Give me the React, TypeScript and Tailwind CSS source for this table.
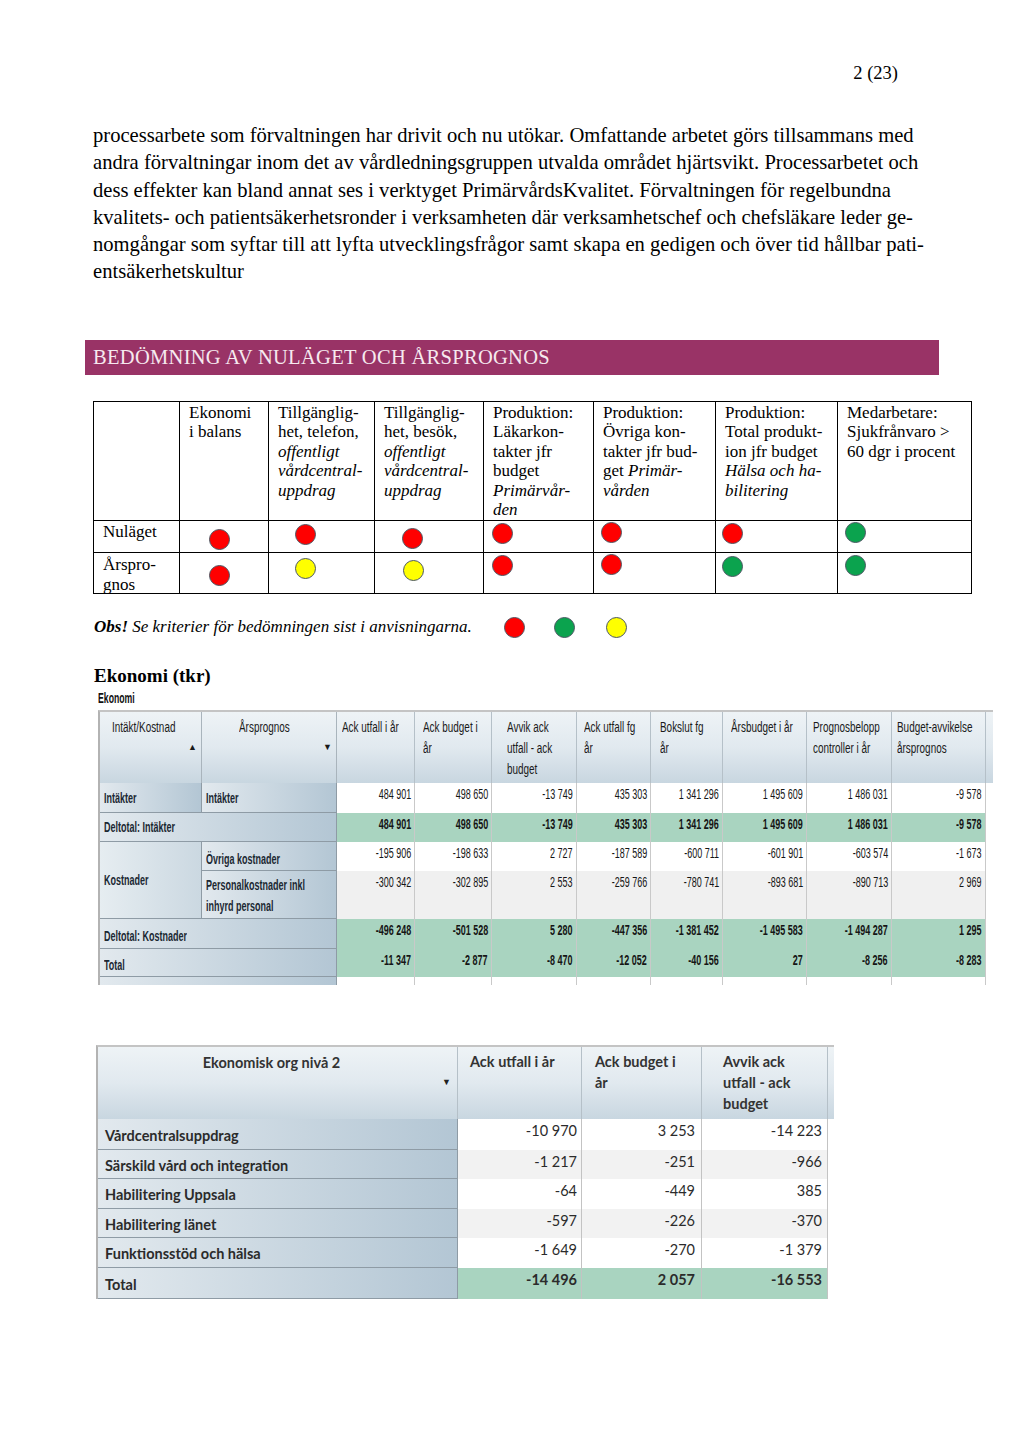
import React from 'react';

type DotColor = 'r' | 'g' | 'y';

const dotBg: Record<DotColor, string> = {
  r: 'bg-[#ff0000]',
  g: 'bg-[#0ba34e]',
  y: 'bg-[#ffff00]',
};

const Dot = ({ c, cls = '' }: { c: DotColor; cls?: string }) => (
  <div className={`w-[21px] h-[21px] rounded-full border-[1.5px] border-[#4b5763] ${dotBg[c]} ${cls}`} />
);

// Bedömning: header texts, one entry per line
const assessHeaders: React.ReactNode[][] = [
  ['Ekonomi', 'i balans'],
  ['Tillgänglig-', 'het, telefon,', <i>offentligt</i>, <i>vårdcentral-</i>, <i>uppdrag</i>],
  ['Tillgänglig-', 'het, besök,', <i>offentligt</i>, <i>vårdcentral-</i>, <i>uppdrag</i>],
  ['Produktion:', 'Läkarkon-', 'takter jfr', 'budget', <i>Primärvår-</i>, <i>den</i>],
  ['Produktion:', 'Övriga kon-', 'takter jfr bud-', <>get <i>Primär-</i></>, <i>vården</i>],
  ['Produktion:', 'Total produkt-', 'ion jfr budget', <i>Hälsa och ha-</i>, <i>bilitering</i>],
  ['Medarbetare:', 'Sjukfrånvaro >', '60 dgr i procent'],
];

const nulaget: { c: DotColor; cls: string }[] = [
  { c: 'r', cls: 'ml-[29px] mt-[8px]' },
  { c: 'r', cls: 'ml-[26px] mt-[3px]' },
  { c: 'r', cls: 'ml-[27px] mt-[7px]' },
  { c: 'r', cls: 'ml-[8px] mt-[2px]' },
  { c: 'r', cls: 'ml-[7px] mt-[1px]' },
  { c: 'r', cls: 'ml-[6px] mt-[2px]' },
  { c: 'g', cls: 'ml-[7px] mt-[1px]' },
];

const arsprognos: { c: DotColor; cls: string }[] = [
  { c: 'r', cls: 'ml-[29px] mt-[12px]' },
  { c: 'y', cls: 'ml-[26px] mt-[5px]' },
  { c: 'y', cls: 'ml-[28px] mt-[7px]' },
  { c: 'r', cls: 'ml-[8px] mt-[2px]' },
  { c: 'r', cls: 'ml-[7px] mt-[1px]' },
  { c: 'g', cls: 'ml-[6px] mt-[3px]' },
  { c: 'g', cls: 'ml-[7px] mt-[2px]' },
];

// Ekonomi table
const ekHeaders = [
  { lines: ['Ack utfall i år'], pl: 'pl-[5px]' },
  { lines: ['Ack budget i', 'år'], pl: 'pl-[8px]' },
  { lines: ['Avvik ack', 'utfall - ack', 'budget'], pl: 'pl-[15px]' },
  { lines: ['Ack utfall fg', 'år'], pl: 'pl-[7px]' },
  { lines: ['Bokslut fg', 'år'], pl: 'pl-[9px]' },
  { lines: ['Årsbudget i år'], pl: 'pl-[8px]' },
  { lines: ['Prognosbelopp', 'controller i år'], pl: 'pl-[6px]' },
  { lines: ['Budget-avvikelse', 'årsprognos'], pl: 'pl-[5px]' },
];

const GREEN = 'bg-[#a9d4c0]';
const GREY = 'bg-[#f0f0f0]';
const WHITE = 'bg-white';

const intakter = ['484 901', '498 650', '-13 749', '435 303', '1 341 296', '1 495 609', '1 486 031', '-9 578'];
const ovriga = ['-195 906', '-198 633', '2 727', '-187 589', '-600 711', '-601 901', '-603 574', '-1 673'];
const personal = ['-300 342', '-302 895', '2 553', '-259 766', '-780 741', '-893 681', '-890 713', '2 969'];
const deltotK = ['-496 248', '-501 528', '5 280', '-447 356', '-1 381 452', '-1 495 583', '-1 494 287', '1 295'];
const total = ['-11 347', '-2 877', '-8 470', '-12 052', '-40 156', '27', '-8 256', '-8 283'];

const headGrad = 'bg-linear-to-b from-[#eef3f6] via-[#e1e9ef] to-[#c8d6e0]';
const labelGrad = 'bg-linear-to-r from-[#e2e9ee] to-[#b3c6d4]';

const NumCells = ({ vals, bg, bold = false }: { vals: string[]; bg: string; bold?: boolean }) => (
  <>
    {vals.map((v, i) => (
      <div key={i} className={`${bg} border-r border-[#c9c9c9] flex justify-end items-start pr-[3px] pt-[2px]`}>
        <span
          className={`inline-block origin-right scale-x-[0.6] whitespace-nowrap text-[15px] leading-[17px] text-[#151515] ${
            bold ? 'font-bold' : ''
          }`}
        >
          {v}
        </span>
      </div>
    ))}
    <div />
  </>
);

const Label = ({ children, cls = '' }: { children: React.ReactNode; cls?: string }) => (
  <div className={`${labelGrad} border-r border-b border-[#8e9ba5] flex flex-col justify-center pl-[4px] text-[15.5px] leading-[21px] text-[#1b2833] font-bold ${cls}`}>
    {children}
  </div>
);

const Sq = ({ children }: { children: React.ReactNode }) => (
  <div className="origin-left scale-x-[0.58] whitespace-nowrap">{children}</div>
);

const Hq = ({ children }: { children: React.ReactNode }) => (
  <div className="origin-left scale-x-[0.64] whitespace-nowrap">{children}</div>
);

// Org nivå 2 table
const orgRows = [
  { label: 'Vårdcentralsuppdrag', vals: ['-10 970', '3 253', '-14 223'], bg: WHITE },
  { label: 'Särskild vård och integration', vals: ['-1 217', '-251', '-966'], bg: 'bg-[#f2f2f2]' },
  { label: 'Habilitering Uppsala', vals: ['-64', '-449', '385'], bg: WHITE },
  { label: 'Habilitering länet', vals: ['-597', '-226', '-370'], bg: 'bg-[#f2f2f2]' },
  { label: 'Funktionsstöd och hälsa', vals: ['-1 649', '-270', '-1 379'], bg: WHITE },
  { label: 'Total', vals: ['-14 496', '2 057', '-16 553'], bg: GREEN, bold: true },
];
const orgPr = ['pr-[4px]', 'pr-[6px]', 'pr-[5px]'];

export default function App() {
  return (
    <div className="w-[1024px] h-[1448px] bg-white text-black font-['Liberation_Serif',serif] overflow-hidden">
      <div className="pt-[62px] pr-[126px] text-right text-[18.5px] leading-[22px]">2 (23)</div>

      <p className="mt-[38px] pl-[93px] text-[20.6px] leading-[27.3px] whitespace-nowrap">
        processarbete som förvaltningen har drivit och nu utökar. Omfattande arbetet görs tillsammans med
        <br />
        andra förvaltningar inom det av vårdledningsgruppen utvalda området hjärtsvikt. Processarbetet och
        <br />
        dess effekter kan bland annat ses i verktyget PrimärvårdsKvalitet. Förvaltningen för regelbundna
        <br />
        kvalitets- och patientsäkerhetsronder i verksamheten där verksamhetschef och chefsläkare leder ge-
        <br />
        nomgångar som syftar till att lyfta utvecklingsfrågor samt skapa en gedigen och över tid hållbar pati-
        <br />
        entsäkerhetskultur
      </p>

      <div className="mt-[54px] ml-[85px] w-[854px] h-[35px] bg-[#993366] flex items-center pl-[8px] text-[20.5px] tracking-[0.3px] text-[#f6e9ef]">
        BEDÖMNING AV NULÄGET OCH ÅRSPROGNOS
      </div>

      {/* Bedömning */}
      <div className="mt-[26px] ml-[93px] w-[879px] border-t border-l border-black grid grid-cols-[86px_89px_106px_109px_110px_122px_122px_134px] grid-rows-[119px_32px_41px] text-[17px] leading-[19.5px]">
        <div className="border-r border-b border-black" />
        {assessHeaders.map((lines, i) => (
          <div key={i} className="border-r border-b border-black pl-[9px] pt-[1px]">
            {lines.map((l, j) => (
              <div key={j} className="whitespace-nowrap">
                {l}
              </div>
            ))}
          </div>
        ))}
        <div className="border-r border-b border-black pl-[9px] pt-[1px]">Nuläget</div>
        {nulaget.map((d, i) => (
          <div key={i} className="border-r border-b border-black">
            <Dot c={d.c} cls={d.cls} />
          </div>
        ))}
        <div className="border-r border-b border-black pl-[9px] pt-[2px] leading-[20px]">
          Årspro-
          <br />
          gnos
        </div>
        {arsprognos.map((d, i) => (
          <div key={i} className="border-r border-b border-black">
            <Dot c={d.c} cls={d.cls} />
          </div>
        ))}
      </div>

      <div className="mt-[23px] ml-[94px] h-[21px] flex items-center text-[17px] leading-[20px] italic">
        <span className="font-bold">Obs!</span>
        <span>&nbsp;Se kriterier för bedömningen sist i anvisningarna.</span>
        <Dot c="r" cls="ml-[32px]" />
        <Dot c="g" cls="ml-[29px]" />
        <Dot c="y" cls="ml-[31px]" />
      </div>

      <h2 className="mt-[27px] ml-[94px] text-[19px] leading-[22px] font-bold">Ekonomi (tkr)</h2>
      <div className="mt-[3px] ml-[98px] h-[16px] font-['Liberation_Sans',sans-serif] text-[15px] leading-[16px] font-bold text-[#111]">
        <div className="origin-left scale-x-[0.58] whitespace-nowrap">Ekonomi</div>
      </div>

      {/* Ekonomi table */}
      <div className="mt-[4px] ml-[98px] w-[895px] border-t-2 border-l-2 border-t-[#c4c4c4] border-l-[#b3b3b3] font-['Liberation_Sans',sans-serif]">
        <div className="grid grid-cols-[102px_135px_78px_77px_85px_74px_72px_84px_85px_94px_7px] grid-rows-[71px_30px_29px_29px_48px_30px_28px_8px]">
          {/* header */}
          <div className={`${headGrad} border-r border-[#a9b4bc] pt-[4px] text-[15.5px] leading-[21px] text-[#1a1a1a]`}>
            <div className="pl-[12px]">
              <Hq>Intäkt/Kostnad</Hq>
            </div>
            <div className="text-right pr-[4px] text-[9px] leading-[21px]">▲</div>
          </div>
          <div className={`${headGrad} border-r border-[#a9b4bc] pt-[4px] text-[15.5px] leading-[21px] text-[#1a1a1a]`}>
            <div className="pl-[37px]">
              <Hq>Årsprognos</Hq>
            </div>
            <div className="text-right pr-[4px] text-[9px] leading-[21px]">▼</div>
          </div>
          {ekHeaders.map((h, i) => (
            <div key={i} className={`${headGrad} border-r border-[#b5c0c8] pt-[4px] ${h.pl} text-[15.5px] leading-[21px] text-[#1a1a1a]`}>
              {h.lines.map((l, j) => (
                <Hq key={j}>{l}</Hq>
              ))}
            </div>
          ))}
          <div className={headGrad} />

          {/* Intäkter */}
          <Label>
            <Sq>Intäkter</Sq>
          </Label>
          <Label>
            <Sq>Intäkter</Sq>
          </Label>
          <NumCells vals={intakter} bg={WHITE} />

          <Label cls="col-span-2">
            <Sq>Deltotal: Intäkter</Sq>
          </Label>
          <NumCells vals={intakter} bg={GREEN} bold />

          <Label cls="row-span-2 from-[#e6edf1] to-[#cbd8e1]">
            <Sq>Kostnader</Sq>
          </Label>
          <Label cls="pt-[6px]">
            <Sq>Övriga kostnader</Sq>
          </Label>
          <NumCells vals={ovriga} bg={WHITE} />

          <Label cls="pt-[2px]">
            <Sq>Personalkostnader inkl</Sq>
            <Sq>inhyrd personal</Sq>
          </Label>
          <NumCells vals={personal} bg={GREY} />

          <Label cls="col-span-2 pt-[4px]">
            <Sq>Deltotal: Kostnader</Sq>
          </Label>
          <NumCells vals={deltotK} bg={GREEN} bold />

          <Label cls="col-span-2 pt-[4px]">
            <Sq>Total</Sq>
          </Label>
          <NumCells vals={total} bg={GREEN} bold />

          <div className={`${labelGrad} col-span-2 border-r border-[#8e9ba5]`} />
          {intakter.map((_, i) => (
            <div key={i} className="border-r border-[#c9c9c9]" />
          ))}
          <div />
        </div>
      </div>

      {/* Org nivå 2 */}
      <div className="mt-[60px] ml-[96px] w-[738px] border-t-2 border-l-2 border-t-[#c4c4c4] border-l-[#b3b3b3] font-['Lato',sans-serif]">
        <div className="grid grid-cols-[360px_124px_120px_126px_6px] grid-rows-[72px_31px_29px_30px_29px_30px_31px]">
          <div className={`${headGrad} border-r border-[#b5c0c8] pt-[5px] text-[14.5px] leading-[21px] font-bold text-[#333]`}>
            <div className="text-center pr-[12px]">Ekonomisk org nivå 2</div>
            <div className="text-right pr-[6px] text-[9px] leading-[18px] text-[#222]">▼</div>
          </div>
          <div className={`${headGrad} border-r border-[#b5c0c8] pt-[4px] pl-[12px] text-[14.5px] leading-[21px] font-bold text-[#333]`}>
            Ack utfall i år
          </div>
          <div className={`${headGrad} border-r border-[#b5c0c8] pt-[4px] pl-[13px] text-[14.5px] leading-[21px] font-bold text-[#333]`}>
            Ack budget i
            <br />
            år
          </div>
          <div className={`${headGrad} border-r border-[#b5c0c8] pt-[4px] pl-[21px] text-[14.5px] leading-[21px] font-bold text-[#333]`}>
            Avvik ack
            <br />
            utfall - ack
            <br />
            budget
          </div>
          <div className={headGrad} />

          {orgRows.map((r) => (
            <React.Fragment key={r.label}>
              <div className={`${labelGrad} border-r border-b border-[#8e9ba5] flex items-center pt-[4px] pl-[7px] text-[14.5px] leading-[18px] font-bold text-[#2b2b2b] whitespace-nowrap`}>
                {r.label}
              </div>
              {r.vals.map((v, i) => (
                <div
                  key={i}
                  className={`${r.bg} border-r border-[#c3c3c3] text-right pt-[3px] ${orgPr[i]} text-[14.5px] leading-[18px] text-[#2b2b2b] ${
                    r.bold ? 'font-bold' : ''
                  }`}
                >
                  {v}
                </div>
              ))}
              <div />
            </React.Fragment>
          ))}
        </div>
      </div>
    </div>
  );
}
